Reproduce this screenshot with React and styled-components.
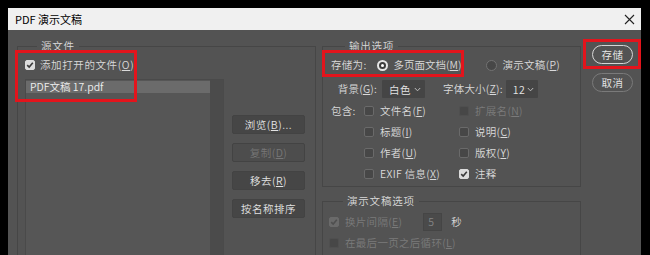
import React from 'react';
import styled, { createGlobalStyle } from 'styled-components';

const Global = createGlobalStyle`
  html, body { margin: 0; padding: 0; background: #000; }
  body { font-family: "Noto Sans CJK SC", "Noto Sans", sans-serif; font-size: 10.5px; font-weight: 350; color: #dadada; }
  * { box-sizing: border-box; }
  u { text-decoration-thickness: 1px; text-underline-offset: 1px; }
`;

const Stage = styled.div`
  position: relative;
  width: 650px;
  height: 255px;
  overflow: hidden;
  background: #000;
  padding: 8px 9px 0 8px;
`;

const Window = styled.div`
  width: 633px;
  height: 247px;
  display: flex;
  flex-direction: column;
`;

const TitleBar = styled.div`
  height: 22px;
  background: #f0f0f0;
  display: flex;
  align-items: center;
  justify-content: space-between;
  padding: 0 6px 0 7px;
  color: #000;
  font-size: 11px;
  font-weight: 400;
`;

const Body = styled.div`
  flex: 1;
  background: #535353;
  display: flex;
  align-items: flex-start;
  padding: 9px 0 0 9px;
  overflow: hidden;
`;

const Group = styled.fieldset`
  margin: 0;
  padding: ${p => p.$pad || '3px 0 0 8px'};
  border: 1px solid #464646;
  min-width: 0;
  width: ${p => p.$w}px;
  height: ${p => (p.$h ? `${p.$h}px` : 'auto')};
`;

const Legend = styled.legend`
  padding: 0 4px;
  margin-left: ${p => p.$ml || 12}px;
  line-height: 14px;
  font-size: 10.5px;
  color: #dadada;
  letter-spacing: 0.8px;
`;

const RightCol = styled.div`
  display: flex;
  flex-direction: column;
  gap: 7px;
  margin-left: 6px;
`;

const ActionCol = styled.div`
  display: flex;
  flex-direction: column;
  gap: 9px;
  margin: 6px 0 0 11px;
`;

const Pill = styled.button`
  width: 41px;
  height: 19px;
  border-radius: 10px;
  border: 1px solid ${p => (p.$primary ? '#d6d6d6' : '#7a7a7a')};
  background: transparent;
  color: #e8e8e8;
  font-family: inherit;
  font-weight: 350;
  font-size: 10.5px;
  letter-spacing: 0.5px;
  padding: 0;
  line-height: 17px;
`;

const Row = styled.div`
  display: flex;
  align-items: center;
  height: ${p => p.$h || 18}px;
  margin-top: ${p => p.$mt || 0}px;
`;

const Text = styled.span`
  color: ${p => (p.$disabled ? '#7b7b7b' : '#dadada')};
  letter-spacing: ${p => (p.$ls !== undefined ? p.$ls : 0.3)}px;
  margin-left: ${p => p.$ml || 0}px;
  white-space: nowrap;
  line-height: 14px;
`;

const Label = styled(Text)`
  display: inline-block;
  width: ${p => p.$w}px;
  text-align: right;
`;

const Box = styled.span`
  width: 10px;
  height: 10px;
  flex: none;
  border-radius: 2px;
  display: inline-flex;
  align-items: center;
  justify-content: center;
  background: ${p => (p.$checked ? (p.$disabled ? '#6a6a6a' : '#dcdcdc') : '#474747')};
  border: 1px solid ${p => (p.$checked ? (p.$disabled ? '#6a6a6a' : '#dcdcdc') : (p.$disabled ? '#4f4f4f' : '#6a6a6a'))};
`;

const Radio = styled.span`
  width: 11px;
  height: 11px;
  flex: none;
  border-radius: 50%;
  display: inline-flex;
  align-items: center;
  justify-content: center;
  background: ${p => (p.$checked ? '#3c3c3c' : '#474747')};
  border: ${p => (p.$checked ? '2px solid #e6e6e6' : '1px solid #727272')};
  margin-left: ${p => p.$ml || 0}px;
  &::after {
    content: '';
    display: ${p => (p.$checked ? 'block' : 'none')};
    width: 3px;
    height: 3px;
    border-radius: 50%;
    background: #fff;
  }
`;

const Check = ({ checked, disabled }) => (
  <Box $checked={checked} $disabled={disabled}>
    {checked && (
      <svg width="8" height="8" viewBox="0 0 8 8">
        <polyline points="1.2,4.2 3.2,6.1 6.8,1.8" fill="none" stroke={disabled ? '#4f4f4f' : '#3a3a3a'} strokeWidth="1.6" />
      </svg>
    )}
  </Box>
);

const Option = ({ checked, disabled, children }) => (
  <Row $h={21}>
    <Check checked={checked} disabled={disabled} />
    <Text $disabled={disabled} $ml={6}>{children}</Text>
  </Row>
);

const ListArea = styled.div`
  display: flex;
  margin-top: 5px;
`;

const ListBox = styled.div`
  width: 199px;
  height: 200px;
  border: 1px solid #4a4a4a;
  background: #565656;
  display: flex;
`;

const ListItems = styled.div`
  flex: 1;
  padding: 1px 0 0 0;
`;

const ListItem = styled.div`
  height: 12px;
  background: #6b6b6b;
  color: #eeeeee;
  padding-left: 4px;
  line-height: 12px;
  font-size: 10.5px;
`;

const Scrollbar = styled.div`
  width: 13px;
  background: #4b4b4b;
`;

const ButtonCol = styled.div`
  display: flex;
  flex-direction: column;
  gap: 9px;
  padding-top: 36px;
  margin-left: 8px;
`;

const Btn = styled.button`
  width: 73px;
  height: 19px;
  border-radius: 2px;
  border: 1px solid #434343;
  background: ${p => (p.disabled ? '#4d4d4d' : '#464646')};
  color: ${p => (p.disabled ? '#777777' : '#e2e2e2')};
  font-family: inherit;
  font-weight: 350;
  font-size: 10.5px;
  letter-spacing: 0.5px;
  padding: 0;
  line-height: 17px;
`;

const Select = styled.div`
  width: ${p => p.$w}px;
  height: 18px;
  background: #454545;
  border-radius: 1px;
  display: flex;
  align-items: center;
  justify-content: space-between;
  padding: 0 4px 0 7px;
  margin-left: ${p => p.$ml || 0}px;
  color: #e4e4e4;
  letter-spacing: 0.5px;
  white-space: nowrap;
`;

const Chevron = () => (
  <svg width="7" height="5" viewBox="0 0 7 5">
    <polyline points="0.8,1 3.5,3.8 6.2,1" fill="none" stroke="#bdbdbd" strokeWidth="1" />
  </svg>
);

const IncludeGrid = styled.div`
  display: grid;
  grid-template-columns: 33px 95px 1fr;
  margin-top: 2px;
`;

const NumInput = styled.div`
  width: 19px;
  height: 18px;
  background: #4a4a4a;
  border: 1px solid #454545;
  color: #858585;
  display: flex;
  align-items: center;
  padding-left: 4px;
  margin-left: 21px;
`;

const RedBox = styled.div`
  position: absolute;
  border: 3px solid #e3141c;
  left: ${p => p.$x}px;
  top: ${p => p.$y}px;
  width: ${p => p.$w}px;
  height: ${p => p.$h}px;
  pointer-events: none;
`;

export default function App() {
  return (
    <>
      <Global />
      <Stage>
        <Window>
          <TitleBar>
            <span>PDF 演示文稿</span>
            <svg width="11" height="11" viewBox="0 0 11 11">
              <path d="M1 1 L10 10 M10 1 L1 10" stroke="#222" strokeWidth="1.1" />
            </svg>
          </TitleBar>
          <Body>
            <Group $w={299} $h={240} $pad="3px 0 0 7px">
              <Legend $ml={12}>源文件</Legend>
              <Row>
                <Check checked />
                <Text $ml={5} $ls={0.6}>添加打开的文件(<u>O</u>)</Text>
              </Row>
              <ListArea>
                <ListBox>
                  <ListItems>
                    <ListItem>PDF文稿 17.pdf</ListItem>
                  </ListItems>
                  <Scrollbar />
                </ListBox>
                <ButtonCol>
                  <Btn>浏览(<u>B</u>)...</Btn>
                  <Btn disabled>复制(<u>D</u>)</Btn>
                  <Btn>移去(<u>R</u>)</Btn>
                  <Btn>按名称排序</Btn>
                </ButtonCol>
              </ListArea>
            </Group>

            <RightCol>
              <Group $w={259} $pad="3px 0 2px 8px">
                <Legend $ml={14}>输出选项</Legend>
                <Row>
                  <Text>存储为:</Text>
                  <Radio $checked $ml={10} />
                  <Text $ml={6} $ls={0}>多页面文档(<u>M</u>)</Text>
                  <Radio $ml={25} />
                  <Text $ml={5}>演示文稿(<u>P</u>)</Text>
                </Row>
                <Row $mt={6}>
                  <Label $w={46} $ls={0.2}>背景(<u>G</u>):</Label>
                  <Select $w={43} $ml={5}>白色<Chevron /></Select>
                  <Text $ml={18} $ls={0.2}>字体大小(<u>Z</u>):</Text>
                  <Select $w={32} $ml={3}>12<Chevron /></Select>
                </Row>
                <IncludeGrid>
                  <Row $h={21}><Text>包含:</Text></Row>
                  <Option>文件名(<u>F</u>)</Option>
                  <Option disabled>扩展名(<u>N</u>)</Option>
                  <span />
                  <Option>标题(<u>I</u>)</Option>
                  <Option>说明(<u>C</u>)</Option>
                  <span />
                  <Option>作者(<u>U</u>)</Option>
                  <Option>版权(<u>Y</u>)</Option>
                  <span />
                  <Option>EXIF 信息(<u>X</u>)</Option>
                  <Option checked>注释</Option>
                </IncludeGrid>
              </Group>

              <Group $w={259} $h={80} $pad="3px 0 0 6px">
                <Legend $ml={14}>演示文稿选项</Legend>
                <Row $h={21}>
                  <Check checked disabled />
                  <Text $disabled $ml={6}>换片间隔(<u>E</u>)</Text>
                  <NumInput>5</NumInput>
                  <Text $ml={9}>秒</Text>
                </Row>
                <Row $h={21}>
                  <Check disabled />
                  <Text $disabled $ml={6}>在最后一页之后循环(<u>L</u>)</Text>
                </Row>
              </Group>
            </RightCol>

            <ActionCol>
              <Pill $primary>存储</Pill>
              <Pill>取消</Pill>
            </ActionCol>
          </Body>
        </Window>
        <RedBox $x={15} $y={50} $w={122} $h={52} />
        <RedBox $x={322} $y={50} $w={142} $h={27} />
        <RedBox $x={583} $y={39} $w={58} $h={30} />
      </Stage>
    </>
  );
}
